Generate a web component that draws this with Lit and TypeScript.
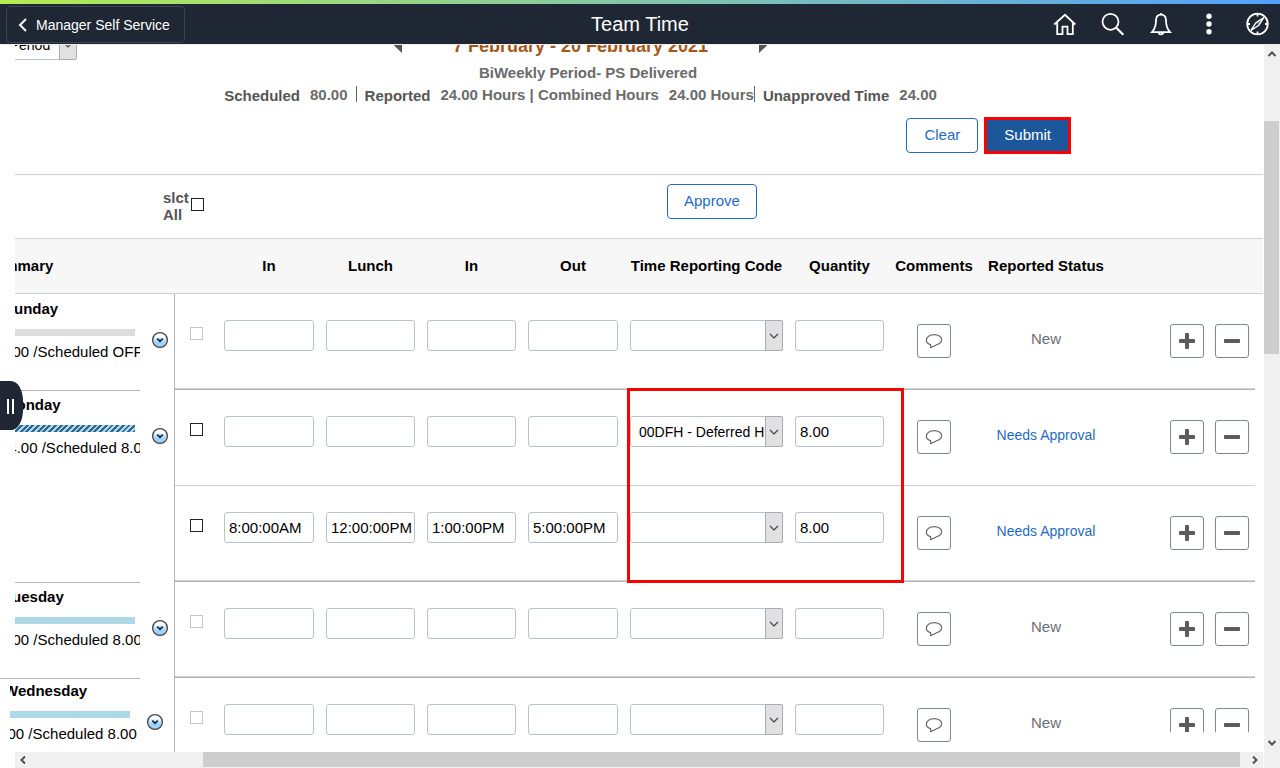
import { LitElement, html, css, svg, nothing } from "lit";
import { customElement, property } from "lit/decorators.js";
import { classMap } from "lit/directives/class-map.js";

interface Entry {
  times: string[];
  code: string;
  quantity: string;
  status: string;
  locked: boolean;
}

interface Day {
  name: string;
  hours: string;
  bar: "off" | "reported" | "planned";
  entries: Entry[];
  shifted?: boolean;
}

const blank = (): Entry => ({ times: ["", "", "", ""], code: "", quantity: "", status: "New", locked: true });

const DAYS: Day[] = [
  { name: "Sunday", hours: "0.00 /Scheduled OFF", bar: "off", entries: [blank()] },
  {
    name: "Monday",
    hours: "24.00 /Scheduled 8.00",
    bar: "reported",
    entries: [
      { times: ["", "", "", ""], code: "00DFH - Deferred Holiday", quantity: "8.00", status: "Needs Approval", locked: false },
      { times: ["8:00:00AM", "12:00:00PM", "1:00:00PM", "5:00:00PM"], code: "", quantity: "8.00", status: "Needs Approval", locked: false },
    ],
  },
  { name: "Tuesday", hours: "0.00 /Scheduled 8.00", bar: "planned", entries: [blank()] },
  { name: "Wednesday", hours: "0.00 /Scheduled 8.00", bar: "planned", entries: [blank()], shifted: true },
];

const TIME_LABELS = ["In", "Lunch", "In", "Out"];

const chevron = (d: string) => html`<svg class="chev" width="10" height="10" viewBox="0 0 10 10" aria-hidden="true">
  <path d=${d} fill="none" stroke="currentColor" stroke-width="2" />
</svg>`;

@customElement("code-select")
class CodeSelect extends LitElement {
  @property() value = "";
  @property() label = "";

  static styles = css`
    :host { display: block; position: relative; }
    .field {
      display: block; box-sizing: border-box; width: 100%; height: 31px; margin: 0; padding: 0 18px 0 8px;
      appearance: none; border: 1px solid #b8c3ce; border-radius: 3px; background: #fff;
      font: 14px "Liberation Sans", Arial, sans-serif; color: #000;
    }
    .arrow {
      position: absolute; top: 0; right: 0; bottom: 0; width: 18px; box-sizing: border-box;
      display: flex; align-items: center; justify-content: center; pointer-events: none;
      border: 1px solid #a9adb1; border-radius: 0 2px 2px 0; background: #e1e1e1;
    }
  `;

  render() {
    return html`
      <select class="field" aria-label=${this.label}><option>${this.value}</option></select>
      <span class="arrow"><svg width="10" height="6" viewBox="0 0 10 6"><path d="M1 1l4 4 4-4" fill="none" stroke="#444" stroke-width="1.2" /></svg></span>
    `;
  }
}

@customElement("app-root")
class AppRoot extends LitElement {
  static styles = css`
    :host {
      display: flex; flex-direction: column; position: relative; height: 100vh; overflow: hidden;
      background: #fff; color: #000; font: 15px/18px "Liberation Sans", Arial, sans-serif;
    }
    button, input { font: inherit; }
    .accent { flex: none; height: 4px; background: linear-gradient(90deg, #b4ec51, #53a0fd); }
    .banner {
      flex: none; display: grid; grid-template-columns: 1fr auto 1fr; align-items: center; height: 40px;
      background: #1e2733; color: #fff; border-bottom: 1px solid #ededee;
    }
    .back {
      justify-self: start; display: flex; align-items: center; gap: 8px; height: 37px; margin-left: 6px; padding: 1px 14px 0 11px;
      border: 1px solid #3c4653; border-radius: 4px; background: none; color: #fff; font-size: 14px;
    }
    .title { margin: 0; font-size: 20px; line-height: 24px; font-weight: 400; }
    .tools { justify-self: end; display: flex; gap: 24px; padding-right: 11px; }
    .tool { display: block; width: 24px; height: 24px; padding: 0; border: 0; background: none; color: #fff; }

    .body { flex: 1; min-height: 0; display: grid; grid-template-columns: minmax(0, 1fr) 17px; grid-template-rows: minmax(0, 1fr) 16px; }
    .view { overflow: hidden; padding-left: 15px; }
    .summary-head { display: grid; grid-template-columns: 62px 1fr; height: 129px; }
    .period { overflow: hidden; height: 15px; }
    .period-field { width: 137px; margin: -16px 0 0 -75px; }
    .totals { margin-left: -62px; padding: 0 117px 0 0; min-width: 0; }
    .date-row { display: flex; justify-content: center; align-items: center; height: 20px; margin-top: -9px; gap: 51px; color: #a85614; font-size: 18px; font-weight: 700; }
    .step { display: block; width: 8px; height: 18px; padding: 0; border: 0; background: none; }
    .cycle { margin: 8px 0 0 15px; text-align: center; font-weight: 700; color: #6b6b6b; }
    .figures { display: flex; justify-content: center; margin: 4px 0 0; font-weight: 700; color: #6b6b6b; white-space: nowrap; }
    .figures dt { padding-top: 1px; margin: 0; color: #555; }
    .figures dd { margin: 0 8px 0 10px; }
    .figures .last { margin: 0 0 0 10px; }
    .figures .mid { margin-right: 0; }
    .figures .tight { margin-right: 0; }
    .rule { width: 1px; height: 16px; margin-right: 8px; background: #666; }
    .actions { display: flex; justify-content: flex-end; gap: 6px; margin-top: 12px; padding-right: 75px; }
    .btn { box-sizing: border-box; height: 35px; padding: 0 17px 1px; border: 1px solid #1f6bc5; border-radius: 4px; background: #fff; color: #1f6bc5; }
    .btn.primary { height: 37px; border: 3px solid #f00; border-radius: 0; background: #1d579b; color: #fff; }
    .actions .plain { align-self: center; }

    .bulk { display: flex; align-items: flex-start; box-sizing: border-box; height: 64px; padding: 9px 0 0 148px; border-top: 1px solid #cbd2d9; }
    .all { display: flex; gap: 3px; padding-top: 5px; font-weight: 700; line-height: 17px; color: #555; }
    .all-text { width: 25px; }
    .bulk .btn { margin-left: 463px; padding: 0 16px 1px; }
    .tick { display: block; appearance: none; box-sizing: border-box; width: 13px; height: 13px; margin: 0; border: 1px solid #222; background: #fff; }
    .tick:disabled { border-color: #c6c6c6; }
    .all .tick { margin-top: 9px; }

    .grid { width: 100%; table-layout: fixed; border-collapse: separate; border-spacing: 0; }
    .c-day { width: 160px; } .c-sel { width: 43px; } .c-time { width: 102px; } .c-time2 { width: 101px; }
    .c-code { width: 165px; } .c-qty { width: 101px; } .c-com { width: 88px; } .c-stat { width: 136px; } .c-end { width: 8px; }
    th { box-sizing: border-box; height: 56px; padding: 0; background: #f7f7f7; border-top: 1px solid #cbd2d9; border-bottom: 1px solid #cbd2d9; text-align: center; white-space: nowrap; }
    .clip { overflow: hidden; text-align: left; }
    .clip .head-text { margin-left: -30px; }
    td { box-sizing: border-box; height: 96px; padding: 0; vertical-align: top; border-bottom: 1px solid #cbd2d9; }
    .day-end td { border-bottom-color: #b3b3b5; box-shadow: inset 0 -1px #cdd3da; }
    .grid .end, .grid .day { border-bottom: 0; box-shadow: none; }
    .grid .day { border-right: 1px solid #b5b5b8; }
    .day-box { display: grid; grid-template-columns: 125px 1fr; }
    .info { overflow: hidden; border-top: 1px solid #b5b5b5; padding-top: 5px; white-space: nowrap; }
    .first .info { border-color: transparent; }
    .name { margin-left: -11px; font-weight: 700; }
    .bar { width: 120px; height: 7px; margin-top: 11px; }
    .bar.off { background: #ddd; }
    .bar.planned { background: #add8e6; }
    .bar.reported { background: repeating-linear-gradient(135deg, #2a6795 0 2px, #add8e6 2px 4px); }
    .hours { margin: 7px 0 0 -15px; }
    .more { display: block; width: 18px; height: 18px; margin: 37px 0 0 11px; padding: 0; border: 0; background: none; }
    .shifted { margin-left: -15px; grid-template-columns: 140px 1fr; }
    .shifted .info { padding: 3px 0 0 10px; }
    .shifted .inner { overflow: hidden; }
    .shifted .name { margin-left: -6px; }
    .shifted .more { margin: 35px 0 0 6px; }

    .pick { padding-top: 33px; padding-left: 15px; }
    .cell { padding: 26px 6px 0; }
    .text { display: block; box-sizing: border-box; width: 100%; height: 31px; padding: 0 2px 0 4px; border: 1px solid #b8c3ce; border-radius: 3px; background: #fff; color: #000; }
    .comment-cell { padding-top: 30px; }
    .square { display: flex; align-items: center; justify-content: center; box-sizing: border-box; width: 34px; height: 34px; padding: 0; border: 1px solid #7f8791; border-radius: 3px; background: #fff; }
    .comment-cell .square { margin: 0 auto; }
    .status { padding-top: 36px; text-align: center; color: #6b6f75; }
    .status a { color: #1f6bc5; text-decoration: none; font-size: 14px; }
    .edit { display: flex; justify-content: flex-end; gap: 11px; margin: 30px 6px 0 0; overflow: hidden; }
    .clipped .edit { height: 24px; }
    .clipped .square { flex: none; }
    .anchor { position: relative; }
    .callout { position: absolute; z-index: 1; left: 3px; top: -2px; box-sizing: border-box; width: 277px; height: 195px; border: 3px solid #f00; pointer-events: none; }

    .scroll { display: flex; align-items: center; background: #f0f0f0; color: #505050; }
    .v { flex-direction: column; margin-left: 1px; }
    .v .lead { flex: 76; }
    .v .thumb { flex: 233; width: 15px; margin-right: 1px; background: #cdcdcd; }
    .v .trail { flex: 398; display: flex; align-items: flex-end; }
    .v .chev { margin: 4px 0; }
    .h { margin-left: 15px; }
    .h .lead { flex: 188; }
    .h .thumb { flex: 1038; height: 15px; margin-bottom: 1px; background: #cdcdcd; }
    .h .trail { flex: 23; display: flex; justify-content: flex-end; }
    .h .chev { margin: 0 3px; }
    .lead, .trail { min-width: 0; min-height: 0; }
    .chev { display: block; }
    .corner { margin-left: 1px; background: #f0f0f0; }
    .drawer {
      position: absolute; z-index: 2; left: 0; top: 381px; display: flex; justify-content: center; align-items: center; gap: 3px;
      width: 23px; height: 49px; padding: 2px 2px 0 0; border: 0; border-radius: 0 12px 12px 0 / 0 20px 20px 0; background: #1e2733;
    }
    .grip { width: 2px; height: 15px; background: #fff; }
  `;

  private tool(label: string, body: unknown) {
    return html`<button class="tool" aria-label=${label}>
      <svg width="24" height="24" viewBox="0 0 24 24" fill="none" stroke="currentColor" stroke-width="1.8">${body}</svg>
    </button>`;
  }

  private entryCells(day: Day, e: Entry, index: number) {
    const where = `${day.name} row ${index + 1}`;
    return html`
      <td class="pick"><input class="tick" type="checkbox" aria-label="Select ${where}" ?disabled=${e.locked} /></td>
      ${e.times.map((t, i) => html`<td class="cell"><input class="text" aria-label="${TIME_LABELS[i]} ${where}" .value=${t} /></td>`)}
      <td class="cell anchor">
        <code-select .value=${e.code} label="Time Reporting Code ${where}"></code-select>
        ${day.name === "Monday" && index === 0 ? html`<div class="callout"></div>` : nothing}
      </td>
      <td class="cell"><input class="text" aria-label="Quantity ${where}" .value=${e.quantity} /></td>
      <td class="comment-cell">
        <button class="square" aria-label="Comments ${where}">
          <svg width="18" height="16" viewBox="0 0 18 16" fill="none" stroke="#666" stroke-width="1.2" stroke-linejoin="round">
            <path d="M5.600 14.600L5.600 11.600C3 10.900 1.400 9.300 1.400 7.200C1.400 4 4.700 1.600 9 1.600S16.600 3.800 16.600 6.600C16.600 9.200 14.200 11.300 11 12C9 13 7.400 14.100 5.600 14.600Z" />
          </svg>
        </button>
      </td>
      <td class="status">${e.status === "New" ? "New" : html`<a href="#status">${e.status}</a>`}</td>
      <td>
        <div class="edit">
          <button class="square" aria-label="Add row after ${where}">
            <svg width="16" height="16" viewBox="0 0 16 16"><path d="M6 1a1 1 0 011-1h2a1 1 0 011 1v5h5a1 1 0 011 1v2a1 1 0 01-1 1h-5v5a1 1 0 01-1 1H7a1 1 0 01-1-1v-5H1a1 1 0 01-1-1V7a1 1 0 011-1h5z" fill="#5c5c5c" /></svg>
          </button>
          <button class="square" aria-label="Delete ${where}">
            <svg width="16" height="16" viewBox="0 0 16 16"><rect y="6" width="16" height="4" rx="1" fill="#5c5c5c" /></svg>
          </button>
        </div>
      </td>
      <td class="end"></td>
    `;
  }

  private dayRows(day: Day, n: number) {
    return day.entries.map((e, i) => html`
      <tr class=${classMap({ "day-end": i === day.entries.length - 1, first: n === 0, clipped: !!day.shifted })}>
        ${i === 0
          ? html`<td class="day" rowspan=${day.entries.length}>
              <div class=${classMap({ "day-box": true, shifted: !!day.shifted })}>
                <div class="info"><div class="inner">
                  <div class="name">${day.name}</div>
                  <div class="bar ${day.bar}"></div>
                  <div class="hours">${day.hours}</div>
                </div></div>
                <button class="more" aria-label="${day.name} details">
                  <svg width="18" height="18" viewBox="0 0 18 18">
                    <defs><linearGradient id="g" x2="0" y2="1"><stop offset=".2" stop-color="#fff" /><stop offset=".65" stop-color="#a3d3fb" /></linearGradient></defs>
                    <circle cx="9" cy="9" r="7.400" fill="url(#g)" stroke="#444" stroke-width="1.300" />
                    <path d="M6.200 7.700L9 10.200l2.800-2.500" fill="none" stroke="#1c2d42" stroke-width="1.800" />
                  </svg>
                </button>
              </div>
            </td>`
          : nothing}
        ${this.entryCells(day, e, i)}
      </tr>
    `);
  }

  render() {
    return html`
      <div class="accent"></div>
      <header class="banner">
        <button class="back">
          <svg width="10" height="14" viewBox="0 0 10 14" fill="none" stroke="currentColor" stroke-width="2"><path d="M8 1L2 7l6 6" /></svg>
          Manager Self Service
        </button>
        <h1 class="title">Team Time</h1>
        <nav class="tools">
          ${this.tool("Home", svg`<path d="M1.200 12.500L12 2.800l10.300 9.700M4.200 11v11.200h5.300v-7.500h5v7.500h5.300V11" />`)}
          ${this.tool("Search", svg`<circle cx="9.500" cy="9.800" r="8" /><path d="M15 15.500l7.300 7.300" stroke-width="2.200" />`)}
          ${this.tool("Notifications", svg`<path d="M12 2.700c-3.300 0-5 2.500-5 5.600 0 5.500-1.200 8.800-4 11.900h18c-2.800-3.100-4-6.400-4-11.900 0-3.100-1.700-5.600-5-5.600zM12 2.700V1M9.700 20.700c.5 2.200 4.100 2.200 4.600 0" />`)}
          ${this.tool("Actions", svg`<g fill="currentColor" stroke="none"><circle cx="12" cy="4.200" r="2.700" /><circle cx="12" cy="12" r="2.700" /><circle cx="12" cy="19.800" r="2.700" /></g>`)}
          ${this.tool("NavBar", svg`<circle cx="12.500" cy="12" r="10.300" /><path d="M18.800 5.500L10.900 10.700 5.900 18.500 13.800 13.300z" stroke-width="1.400" /><path d="M10.900 10.700L13.800 13.300 18.800 5.500z" fill="#fff" fill-opacity=".35" stroke="none" /><path d="M12.500 2v2.500M12.500 19.500V22M2.500 12H5M20 12h2.500" />`)}
        </nav>
      </header>
      <main class="body">
        <div class="view">
          <section class="summary-head">
            <div class="period"><code-select class="period-field" label="View By" .value=${"Calendar Period"}></code-select></div>
            <div class="totals">
              <div class="date-row">
                <button class="step" aria-label="Previous period"><svg width="8" height="18" viewBox="0 0 8 18"><path d="M8 1v15L0 8.500z" fill="#555" /></svg></button>
                <span>7 February - 20 February 2021</span>
                <button class="step" aria-label="Next period"><svg width="8" height="18" viewBox="0 0 8 18"><path d="M0 1v15l8-7.500z" fill="#555" /></svg></button>
              </div>
              <div class="cycle">BiWeekly Period- PS Delivered</div>
              <dl class="figures">
                <dt>Scheduled</dt><dd>80.00</dd><div class="rule"></div>
                <dt>Reported</dt><dd class="mid">24.00 Hours | Combined Hours</dd><dd class="tight">24.00 Hours</dd><div class="rule"></div>
                <dt>Unapproved Time</dt><dd class="last">24.00</dd>
              </dl>
              <div class="actions">
                <button class="btn plain">Clear</button>
                <button class="btn primary">Submit</button>
              </div>
            </div>
          </section>
          <section class="bulk">
            <label class="all"><span class="all-text">slct All</span><input class="tick" type="checkbox" /></label>
            <button class="btn">Approve</button>
          </section>
          <table class="grid">
            <colgroup>
              <col class="c-day" /><col class="c-sel" /><col class="c-time" /><col class="c-time2" /><col class="c-time2" /><col class="c-time" />
              <col class="c-code" /><col class="c-qty" /><col class="c-com" /><col class="c-stat" /><col /><col class="c-end" />
            </colgroup>
            <thead><tr>
              <th><div class="clip"><div class="head-text">Summary</div></div></th><th></th>
              ${TIME_LABELS.map((t) => html`<th>${t}</th>`)}
              <th>Time Reporting Code</th><th>Quantity</th><th>Comments</th><th>Reported Status</th><th></th><th></th>
            </tr></thead>
            <tbody>${DAYS.map((d, n) => this.dayRows(d, n))}</tbody>
          </table>
        </div>
        <div class="scroll v">
          <div class="lead">${chevron("M1.500 7L5 3.500 8.500 7")}</div><div class="thumb"></div><div class="trail">${chevron("M1.500 3L5 6.500 8.500 3")}</div>
        </div>
        <div class="scroll h">
          <div class="lead">${chevron("M7 1.500L3.500 5 7 8.500")}</div><div class="thumb"></div><div class="trail">${chevron("M3 1.500L6.500 5 3 8.500")}</div>
        </div>
        <div class="corner"></div>
      </main>
      <button class="drawer" aria-label="Open side panel"><span class="grip"></span><span class="grip"></span></button>
    `;
  }
}
